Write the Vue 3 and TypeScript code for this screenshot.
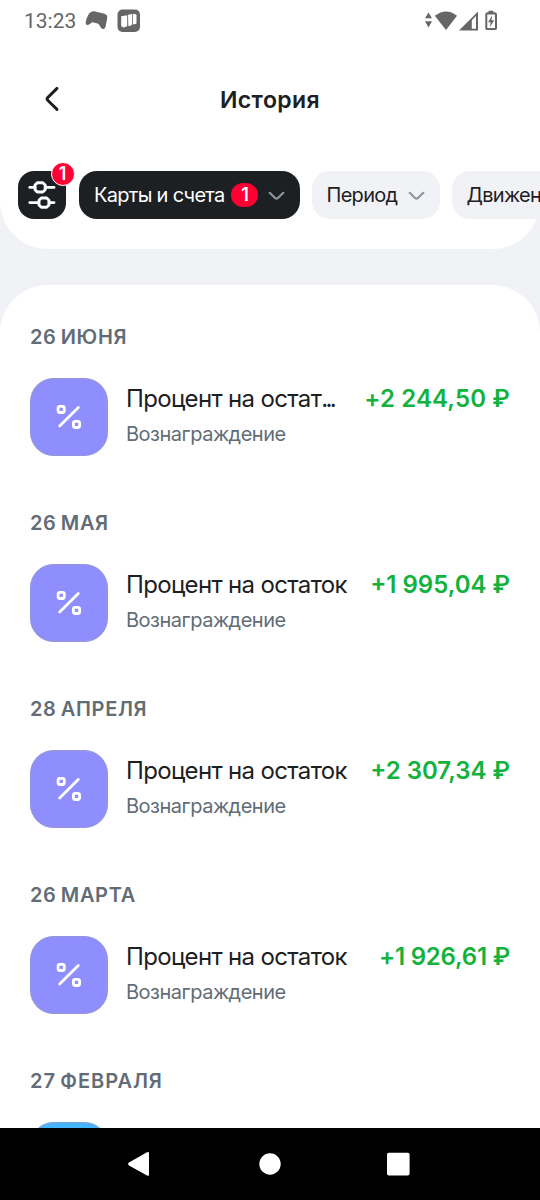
<script setup lang="ts">
interface Operation {
  date: string
  title: string
  dots?: string
  amount: string
  cls: string
}

const operations: Operation[] = [
  { date: '26 ИЮНЯ', title: 'Процент на остат', dots: '...', amount: '+2 244,50 ₽', cls: 'a1' },
  { date: '26 МАЯ', title: 'Процент на остаток', amount: '+1 995,04 ₽', cls: 'a2' },
  { date: '28 АПРЕЛЯ', title: 'Процент на остаток', amount: '+2 307,34 ₽', cls: 'a3' },
  { date: '26 МАРТА', title: 'Процент на остаток', amount: '+1 926,61 ₽', cls: 'a4' },
]
</script>

<template>
  <div class="screen">
    <header class="top">
      <div class="status">
        <span class="clock">13:23</span>
        <svg class="pad" width="24" height="20" viewBox="0 0 24 20">
          <path fill="#666" d="M6 2Q7.500.9 9 1.200L19.500 3.800Q22.600 4.800 22.200 8L20.600 16.500Q20 19.400 17.600 19Q15.800 18.500 15 16.200Q14.200 14.200 12.500 13.400L8.500 12.400Q6.800 12.200 5.600 13.400L3.600 14.800Q.8 15.800.6 13Q.9 9 3 5.400Q4 3 6 2Z" />
        </svg>
        <svg class="appicon" width="24" height="24" viewBox="0 0 24 24">
          <rect x=".5" y=".5" width="22.500" height="22.500" rx="5" fill="#666" />
          <path fill="#fff" d="M4.200 7.300 10.200 6.200V17.300L6.800 18.400 4.200 17.200Z M11 5.800 15.200 5V15.800L12.200 17.200 11.300 16.700Z M16 4.800 19.500 5.500V14.500L17 15.500 16 15Z" />
        </svg>
        <svg class="signals" width="76" height="24" viewBox="0 0 76 24">
          <g fill="#666">
            <path d="M4.500 3.500 8 9.200H1ZM4.500 18.500 8 12.200H1Z" />
            <path d="M10.800 6.800Q22.500-1.800 33 6.800L22 21Z" />
            <path d="M35 21.500 54 2.500V21.500Z" />
            <path d="M63.500 3.300H64.500V1.800H69.300V3.300H70.600Q73 3.300 73 5.500V19.300Q73 21 71.300 21H62.900Q61.300 21 61.300 19.300V5.500Q61.300 3.300 63.500 3.300Z" />
          </g>
          <path fill="#fff" d="M47.800 11.200 52 7V19.700H47.800ZM63.300 5.500H71V19H63.300Z" />
          <path fill="#666" d="M68 6.500 64.100 13.200H66.600L66 18 70.200 11.200H67.500Z" />
        </svg>
      </div>

      <div class="titlebar">
        <svg class="back" width="20" height="28" viewBox="0 0 20 28">
          <path d="M14 3.400 4.700 12.600Q3.400 14 4.700 15.300L14 24.400" fill="none" stroke="#1d2023" stroke-width="2.900" stroke-linecap="round" />
        </svg>
        <h1>История</h1>
      </div>

      <div class="filters">
        <button class="tune">
          <svg width="48" height="48" viewBox="0 0 48 48" fill="none" stroke="#fff" stroke-width="2.900" stroke-linecap="round" stroke-linejoin="round">
            <path d="M11.800 16.400H17M27.300 16.400H36M11.800 31.600H20.500M31 31.600H36" />
            <path d="M19.300 11.800H24.800L27.200 14V18.800L24.800 21H19.300L17 18.800V14ZM23.300 27H28.700L31 29.200V34L28.700 36.200H23.300L21 34V29.200Z" />
          </svg>
          <span class="badge">1</span>
        </button>
        <button class="chip dark">
          <span>Карты и счета</span>
          <span class="count">1</span>
          <svg class="chev" width="17" height="10" viewBox="0 0 17 10"><path d="M1.700 1.800 7.300 7.200Q8.500 8.200 9.700 7.200L15.300 1.800" /></svg>
        </button>
        <button class="chip period">
          <span>Период</span>
          <svg class="chev" width="17" height="10" viewBox="0 0 17 10"><path d="M1.700 1.800 7.300 7.200Q8.500 8.200 9.700 7.200L15.300 1.800" /></svg>
        </button>
        <button class="chip move"><span>Движение</span></button>
      </div>
    </header>

    <main class="history">
      <section v-for="op in operations" :key="op.date" class="day">
        <h2>{{ op.date }}</h2>
        <div class="row">
          <div class="tile">
            <svg width="78" height="78" viewBox="0 0 78 78" fill="none" stroke="#fff" stroke-width="2.800" stroke-linecap="round">
              <path d="M29.700 48 48.300 29.500" />
              <rect x="28.100" y="28.300" width="6.200" height="6.200" rx="1.700" />
              <rect x="43.400" y="43.300" width="6.200" height="6.200" rx="1.700" />
            </svg>
          </div>
          <div class="info">
            <div class="name">{{ op.title }}<span v-if="op.dots" class="dots">{{ op.dots }}</span></div>
            <div class="kind">Вознаграждение</div>
          </div>
          <div class="amount"><span :class="op.cls">{{ op.amount }}</span></div>
        </div>
      </section>
      <section class="day">
        <h2 class="feb">27 ФЕВРАЛЯ</h2>
        <div class="row"><div class="tile blue"></div></div>
      </section>
    </main>

    <nav class="nav">
      <svg width="540" height="72" viewBox="0 0 540 72" fill="#fff">
        <path d="M129 34.600 147 24.300Q149 23.300 149 25.300V46.600Q149 48.600 147 47.600L129 37.400Q127 36 129 34.600Z" />
        <circle cx="270" cy="36" r="10.700" />
        <rect x="387" y="24.700" width="22.600" height="22.800" rx="1.800" />
      </svg>
    </nav>
  </div>
</template>

<style>
html,
body {
  margin: 0;
  background: #f1f2f6;
}
</style>

<style scoped>
.screen {
  width: 540px;
  height: 1200px;
  overflow: hidden;
  display: flex;
  flex-direction: column;
  background: #f1f2f6;
  font-family: Inter, "Liberation Sans", sans-serif;
  color: #1d2023;
}
.top {
  height: 249px;
  flex: none;
  background: #fff;
  border-radius: 0 0 48px 48px;
}
.status {
  height: 40px;
  display: flex;
  align-items: center;
  padding-left: 24px;
}
.clock {
  width: 60px;
  padding-top: 1px;
  font: 400 21px/40px Roboto, sans-serif;
  color: #666;
}
.pad {
  margin-left: 1px;
}
.appicon {
  margin-left: 8px;
  margin-top: 1px;
}
.signals {
  margin-left: 283px;
  margin-top: 1px;
}
.titlebar {
  height: 120px;
  display: grid;
  grid-template-columns: 90px 1fr 90px;
  align-items: center;
}
.back {
  margin-left: 43px;
  margin-top: -2px;
}
h1 {
  margin: 0;
  text-align: center;
  font-size: 23px;
  font-weight: 600;
  letter-spacing: 0.4px;
}
.filters {
  display: flex;
  gap: 12px;
  padding: 11px 0 0 18px;
  overflow: hidden;
  overflow: clip;
  overflow-clip-margin: 12px;
  height: 48px;
}
button {
  border: 0;
  padding: 0;
  font: inherit;
  color: inherit;
}
.tune {
  position: relative;
  width: 48px;
  height: 48px;
  flex: none;
  margin-right: 1.4px;
  background: #1d2023;
  border-radius: 16px;
}
.tune svg {
  display: block;
}
.badge {
  position: absolute;
  top: -9px;
  right: -8.5px;
  width: 22px;
  height: 22px;
  border: 1.5px solid #fff;
  border-radius: 50%;
  background: #ff0032;
  color: #fff;
  font-size: 18px;
  font-weight: 600;
  line-height: 22px;
  text-align: center;
}
.chip {
  height: 48px;
  flex: none;
  box-sizing: border-box;
  display: flex;
  align-items: center;
  padding: 0 15px;
  border-radius: 18px;
  background: #f1f2f6;
  font-size: 20px;
  line-height: 24px;
  letter-spacing: -0.7px;
  white-space: nowrap;
}
.chip > span:first-child {
  margin-left: -0.5px;
  margin-top: -1px;
}
.dark {
  width: 220.6px;
  background: #1d2023;
  color: #fff;
}
.period {
  width: 128px;
}
.count {
  width: 27px;
  height: 24px;
  margin-left: auto;
  margin-right: 9.5px;
  border-radius: 12px;
  background: #ff0032;
  font-size: 18px;
  font-weight: 600;
  letter-spacing: 0;
  text-align: center;
}
.chev {
  flex: none;
  margin-top: 2px;
  fill: none;
  stroke: #8d969f;
  stroke-width: 2.2;
  stroke-linecap: round;
}
.period .chev {
  margin-left: auto;
}
.history {
  height: 843px;
  flex: none;
  margin-top: 36px;
  box-sizing: border-box;
  padding: 37px 30px 0;
  overflow: hidden;
  background: #fff;
  border-radius: 48px 48px 0 0;
}
.day {
  height: 186px;
}
h2 {
  margin: 0 0 26px;
  font-size: 20px;
  line-height: 30px;
  font-weight: 600;
  letter-spacing: 0.66px;
  word-spacing: -1.5px;
  color: #626c77;
  white-space: nowrap;
}
.feb {
  letter-spacing: 0.95px;
}
.row {
  display: flex;
}
.tile {
  width: 78px;
  height: 78px;
  flex: none;
  box-shadow: inset 0 0 0 1.500px rgba(150, 155, 190, 0.45);
  border-radius: 24px;
  background: #8f8eff;
}
.blue {
  background: #45b6fc;
}
.info {
  margin-left: 18px;
  white-space: nowrap;
}
.name {
  margin-top: 3px;
  font-size: 24px;
  line-height: 36px;
  letter-spacing: -0.66px;
}
.dots {
  letter-spacing: -2.6px;
}
.kind {
  margin-top: -1px;
  font-size: 20px;
  line-height: 36px;
  letter-spacing: -0.48px;
  color: #626c77;
}
.amount {
  flex: 1;
  min-width: 0;
  display: flex;
  justify-content: flex-end;
  margin-top: 3px;
  font-size: 24px;
  line-height: 36px;
  font-weight: 600;
  color: #12b23c;
  white-space: nowrap;
}
.a1 {
  letter-spacing: 0.15px;
}
.a4 {
  letter-spacing: -0.2px;
}
.nav {
  height: 72px;
  flex: none;
  background: #000;
}
.nav svg {
  display: block;
}
</style>
